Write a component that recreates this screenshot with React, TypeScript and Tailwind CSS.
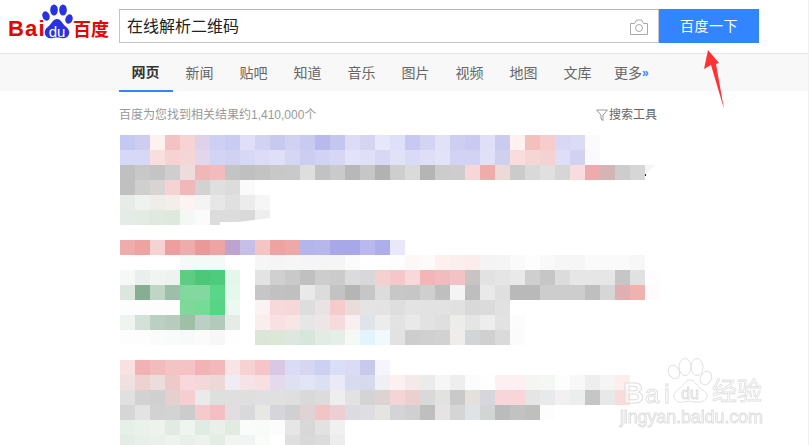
const navItems = ["网页", "新闻", "贴吧", "知道", "音乐", "图片", "视频", "地图", "文库"];

// mosaic rows, each cell is 15x15 and the first one sits at x=120
const block1 = [
  "c5c8f0 cdcdf2 fdf2f0 f3c2c2 f7d3d3 ddd2ea ced0f3 c9cbf3 dfdff9 d2d2f3 c8c9ef d1d2f2 c9caf0 b9b9ec c5c6ef dcdcf6 d5d5f2 e6e7fa dedff8 c8c9f3 d3d3f3 e1e1f8 cecef0 c9c9f2 dfdff8 cbcbf0 fdf2f0 f3bfbf f6cccc d8d8f4 dbdbf6 fbfbfe",
  "d7d8f6 d8d8f6 f8dfdd f5d3d2 f5d6d6 e2d6ea d2d4f5 d0d1f3 d7d8f6 dcdcf6 dfdff8 d5d5f4 cdcdf2 d2d2f4 d7d7f5 e2e2fa dfdff7 d8d8f5 e1e1f7 d9dbf6 dedef6 e2e2f8 d2d3f4 d2d2f4 e0e0f8 cfcff0 fadcdc f6d6d5 f5d2d2 dedef8 d1d1f2 faf9fe",
  "c0c0c0 c8c8c8 c4c4c4 cecece ecdcdc f0b6b8 f2bcbe c4c4c4 c0c0c0 c3c3c3 c8c8c8 c9c9c9 dedede c2c2c2 cacaca b8b8b8 c6c6c6 b2b2b2 cecece dadada b5b5b5 cccccc cecccc f6d6d6 f0abab ecdad8 cbcbcb d9d9d9 e0e0e0 d6d6d6 f9dcdf edabab d4b4b4 cdcdcd d6d6d6",
  "c0c0c0 cfcfcf d8d4d4 f5d3d3 f0b8b8 d4d1d1 dfdfdf dcdcdc fafafa",
  "e7ece8 eff2ef eeede8 f3eeea fdf3f3 f4f4f4 e7e7e7 e0e0e0 ececec f6f6f6",
  "e3ece6 e4ebe0 e0e9df dfe8dd f4f8f4 fbfbfb dcdcdc dcdcdc d9d9d9 eeeeee",
];

const block2 = [
  "eeadad eea3a3 f7d2d2 ee9e9e edadad ea9999 eca4a4 bea3cf c7bfe7 f5c5c5 eea3a3 eea8a8 b5b5ee b7b7ee a8a8e8 a8a8e8 bab8ee aeaeec e9e8fb",
  "ffffff ffffff ffffff ffffff f4faf7 f4faf7 f4faf7 fefefe ffffff f6f6f6 f5f5f5 f6f6f6 f5f5f5 f5f5f5 f5f5f5 fbfbfb ffffff ffffff fefdfd fdf7f5 fffafa fdf0ee fbefed fcecec f4f4f4 f5f5f5 fafafa fdfdfd f9f9f9 f6f6f6 f6f6f6 fafafa fafafa fafafa f7f7f7",
  "f6f8f7 e9efec f1f5f1 eff3ef 5ccd83 4cc878 4fcb7e e3f7ea ffffff e3e3e3 d0d0d0 c9c9c9 c0c0c0 cdcdcd cbcbcb dbdbdb d8d7da f4d0d1 f4c8ca f8d8da f2b6b9 f2bcbe f3c2c5 c9c4c4 e2e2e2 e5e5e5 e9e9e9 cfcfcf c6c6c6 dcdcdc e6e6e6 e6e6e6 e6e6e6 c6c6c6 e1e1e1 fefcfe",
  "dce6df 85ae92 bfd5c5 9dbea9 82d89f 83d8a0 5ad688 e5f8ec ffffff c6c6c6 c1c1c1 c0c0c0 e9e9e9 dcdcdc c3c3c3 b5b5b5 c6c6c6 dcdcdc c7c7c7 c6c6c6 cfcfcf bfbfbf f4f4f4 bebebe e9e9e9 dfdfdf b9b9b9 b9b9b9 cdcdcd cdcdcd cdcdcd bfbfbf d6d6d6 e0afb2 f0b1b1 fffafc",
  "fdfdfd fdfdfd fdfdfd fdfdfd 7dd89a 74dc97 58d584 ecf9f0 ffffff fdf2f3 f7d8db f7d8da dddddd e9e3e4 f5cbcc ebdcdc e4e4e4 e3e3e3 dedede e3e3e3 e2e2e2 e2e2e2 e1e1e1 d9d9d9 dbdbdb e1e1e1",
  "eff4f0 d3e1d9 bbcfc3 b7ccbd 9fbfa8 bdcfc5 b3cabb e5ece8 ffffff faeded f9e0e2 f8e6e7 e6e6e6 ece6e7 f6dadd f8f0f0 dfe4e8 ececec e3e3e3 e9e9e9 e2e2e2 dfdfdf ecedea e5e5e5 ededed e2e2e2 fcfcfc",
  "fdfdfd fdfdfd fbfbfb f9fafa f8faf9 fafbfa f6f7f6 fefefe ffffff dbe6d8 dde7d8 dee7df d8e5da e2ece5 e5eee7 f4f9f5 e3f4fd f1f9fd e2e2e2 cdcdcd d0d0d0 d2d2d2 eeedeb d2d5d8 d0d0d0 dadada fbfbfb",
];

const block3 = [
  "f8e1e0 f1b2b3 f3bcbc f4c4c5 f5c3c5 f2b3b5 f3b8ba f8e3e5 f7d2d2 f6c5c7 d8c8e4 d9dbf7 d6d6f3 ccd1f2 dadef6 dbdbf5 c9c9ee f5f6fd",
  "f0e1e1 eed2d2 eddcdc edc9c9 f8d8dc f2d8da edd8d8 f0ecf6 f6e3e8 f8e0e2 e3daee dfe1f3 e1e5f5 dde0f2 e9e9f9 d8dbee d7daec f0eff4 fdf0f0 f5eaea ebebeb f6f6f6 eeeeee fcfcfc fefefe fdf0f2 fdf0f2 f5f5f3 f5f7f5 fdfdfd f8f8f8 eeeeee f5f5f5 fdeeee",
  "e0e0e0 d2d2d2 d0d0d0 e6cfcf f6cdd0 eaeaea dee0de dfdfdf dfdfe0 e0dfe2 e0e0e0 dfdfdf d9d9d9 dcdcdc eeeeee e2e2e2 d4d4d4 ddd3d3 f5d4d8 eccfcf d9d9d9 e2e2e0 c9c9c9 e4e0dc d6d6dc f8d5d8 f8d5d8 e5e5e5 e7e9ea f3f0f1 eceeee c6c6c6 e8e8e8 f8dcdc",
  "d6d6d6 e3e3e3 d2d2d2 d3d3d3 cccccc f4cbcc f3bfc2 e1dde0 d9d9dc e7e8e4 d6d5db d0d0d0 dfd4d4 f3c4c5 edced2 dcdbdf dfdde1 e4e4e1 d4d3d6 d0d0d3 bfbfbf e5e3e3 d5d5d5 e0e3e6 d3d5d5 b9bbbc c2c2c2 bfbfbd fcfdfc",
  "e6efe8 eaf0ea edf2ed e1ebe4 eef4ef e0ebe3 e9f0e9 e1ebe1 f9fcf9 f9fbf9 fcfcfc e6e6e6 d8d8d8 e2e2e2 f0f0f0",
  "e3ece5 e9f0ea e9f1ea eff3ef e8f0e9 edf2ed e4ede4 f1f4ef f0f5f3 fafcfa ffffff dfdfdf d9d9d9 dcdcdc ededed",
];

function Mosaic({ rows }: { rows: string[] }) {
  return (
    <div className="ml-[120px] flex flex-col">
      {rows.map((row, i) => (
        <div key={i} className="flex h-[15px]">
          {row.split(" ").map((c, j) => (
            <div key={j} className="h-[15px] w-[15px] shrink-0" style={{ backgroundColor: `#${c}` }} />
          ))}
        </div>
      ))}
    </div>
  );
}

function Logo() {
  return (
    <svg width="102" height="36" viewBox="0 0 102 36" className="shrink-0">
      <text x="0" y="32" fontFamily="'Liberation Sans', sans-serif" fontWeight="700" fontSize="22" fill="#e10601" letterSpacing="1.2">Bai</text>
      <g fill="#2932e1">
        <ellipse cx="38" cy="12" rx="3.6" ry="4.8" transform="rotate(-20 38 12)" />
        <ellipse cx="46" cy="6" rx="3.8" ry="5.6" />
        <ellipse cx="55" cy="6" rx="3.8" ry="5.6" />
        <ellipse cx="61" cy="15" rx="3.6" ry="4.8" transform="rotate(20 61 15)" />
        <path d="M49 15c-4 0-5 4-8 7-3 2-5 5-4 8 1 4 5 5 8 4 3-.6 5-.6 8 0 3 1 7 0 8-4 1-3-1-6-4-8-3-3-4-7-8-7z" />
      </g>
      <text x="49" y="33" textAnchor="middle" fontFamily="'Liberation Sans', sans-serif" fontSize="15" fill="#fff">du</text>
      <text x="65" y="32" fontFamily="'Noto Sans CJK SC', sans-serif" fontWeight="700" fontSize="18" fill="#e10601">百度</text>
    </svg>
  );
}

function CameraIcon() {
  return (
    <svg width="18" height="16" viewBox="0 0 18 16" fill="none" stroke="#a8a8a8" strokeWidth="1" className="shrink-0">
      <path d="M.5 4.5h4l2-3.5h5l2 3.5h4v11H.5z" />
      <circle cx="9" cy="9" r="3.5" />
    </svg>
  );
}

function Arrow() {
  return (
    <svg width="24" height="62" viewBox="0 0 24 62" className="absolute left-[702px] top-[49px]">
      <path d="M6 1 17 14 14 15 22 60 9 16 2 20z" fill="#ff3333" />
    </svg>
  );
}

// bits of the screenshot's smudged mosaic edges
function Smudges() {
  return (
    <>
      <svg width="12" height="12" viewBox="0 0 12 12" className="absolute left-[644px] top-[165px]">
        <path d="M1 0h10L1 10z" fill="#f5f5f5" />
        <rect x="1" y="9" width="1" height="2" fill="#222" />
      </svg>
      <svg width="52" height="8" viewBox="0 0 52 8" className="absolute left-[219px] top-[217px]">
        <path d="M1 8V5l18 0L51 1v7z" fill="#fff" />
      </svg>
    </>
  );
}

function Watermark() {
  const stroke = "#e0e0e0";
  return (
    <svg width="148" height="72" viewBox="0 0 148 72" className="absolute left-[618px] top-[357px] blur-[0.3px]">
      <g fill="#ffffff" fillOpacity="0.55" stroke={stroke} strokeWidth="1">
        <ellipse cx="56" cy="15" rx="5.5" ry="7" transform="rotate(-25 56 15)" />
        <ellipse cx="67" cy="10" rx="6" ry="8.5" />
        <ellipse cx="79" cy="10" rx="6" ry="8.5" />
        <ellipse cx="88" cy="21" rx="5.5" ry="7" transform="rotate(25 88 21)" />
        <path d="M72 23c-5 0-6 5-10 8-4 3-7 5-6 9 1 4 5 6 9 5 4-1 7-1 11 0 5 1 12-1 13-5 1-4-3-6-7-9-4-3-5-8-10-8z" />
      </g>
      <g fontFamily="'Liberation Sans', sans-serif" fill="#ffffff" fillOpacity="0.55" stroke={stroke} strokeWidth="1">
        <text x="5" y="46" fontSize="29" fontWeight="700">B</text>
        <text x="27" y="46" fontSize="26">a</text>
        <text x="46" y="46" fontSize="26">i</text>
        <text x="63" y="42" fontSize="16">du</text>
        <text x="2" y="66" fontSize="18" textLength="143" lengthAdjust="spacing">jingyan.baidu.com</text>
      </g>
      <text x="94" y="43" fontFamily="'Noto Sans CJK SC', sans-serif" fontSize="25" fill="#ffffff" stroke={stroke} strokeWidth="0.8">经验</text>
    </svg>
  );
}

export default function App() {
  return (
    <div className="relative h-[445px] w-[809px] overflow-hidden border-r border-[#f0f0f0] bg-white font-['Liberation_Sans','Noto_Sans_CJK_SC',sans-serif]">
      {/* Search header */}
      <div className="flex h-[53px] items-start pl-[8px] pt-[9px]">
        <div className="-mt-[5px] w-[111px]">
          <Logo />
        </div>
        <div className="flex h-[34px] w-[540px] items-center border border-[#c4c4c4] border-t-[#b8b8b8] pl-[7px] pr-[10px] pt-[2px]">
          <span className="flex-1 text-base text-[#222]">在线解析二维码</span>
          <CameraIcon />
        </div>
        <button className="h-[34px] w-[100px] bg-[#3385ff] text-sm tracking-[0.5px] text-white">百度一下</button>
      </div>

      {/* Tabs */}
      <div className="flex h-[38px] border-t border-[#e6e6e6] bg-[#f8f8f8] pl-[119px]">
        {navItems.map((item, i) => (
          <div
            key={item}
            className={
              i === 0
                ? "flex h-[38px] w-[54px] items-center justify-center border-b-[2px] border-[#3385ff] pr-[1px] text-sm font-bold text-[#333]"
                : "flex h-[38px] w-[54px] items-center justify-center pr-[1px] text-sm text-[#666]"
            }
          >
            {item}
          </div>
        ))}
        <div className="flex h-[38px] items-center pl-[9px] text-sm text-[#666]">
          更多<span className="text-xs font-bold text-[#3385ff]">»</span>
        </div>
      </div>

      {/* Result count and tools */}
      <div className="flex h-[44px] w-[657px] items-center justify-between pl-[119px] pt-[3px] text-xs">
        <span className="text-[#999]">百度为您找到相关结果约1,410,000个</span>
        <span className="flex items-center gap-[1px] text-[#666]">
          <svg width="12" height="12" viewBox="0 0 12 12" fill="none" stroke="#999" strokeWidth="1">
            <path d="M.5 1h11L7 6v5.5L5 10V6z" />
          </svg>
          搜索工具
        </span>
      </div>

      {/* Blurred results */}
      <div className="flex flex-col gap-[15px]">
        <Mosaic rows={block1} />
        <Mosaic rows={block2} />
        <Mosaic rows={block3} />
      </div>

      <Smudges />
      <Arrow />
      <Watermark />
    </div>
  );
}
